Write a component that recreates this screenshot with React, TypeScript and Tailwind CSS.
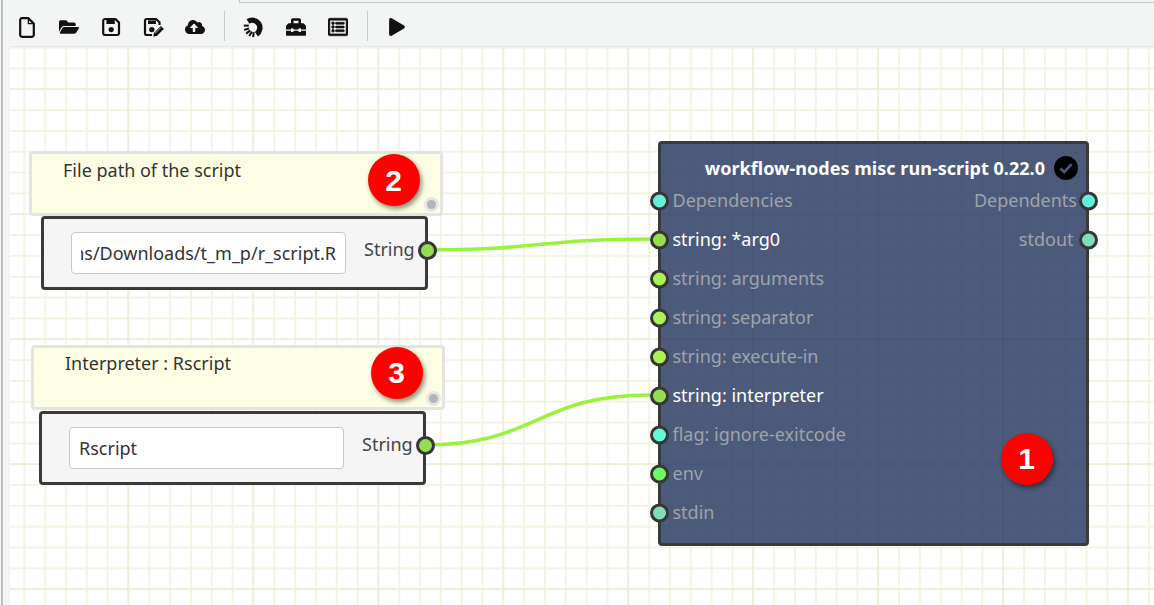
import { FaFolderOpen, FaCloudUploadAlt, FaToolbox, FaRegListAlt, FaPlay } from "react-icons/fa";

const gridClass =
  "bg-fixed bg-[image:linear-gradient(to_right,#e7ead6_1.5px,transparent_1.5px),linear-gradient(to_bottom,#e7ead6_1.5px,transparent_1.5px),linear-gradient(to_right,#f3f5e4_1.5px,transparent_1.5px),linear-gradient(to_bottom,#f3f5e4_1.5px,transparent_1.5px)] bg-[size:125px_125px,125px_125px,20.833px_20.833px,20.833px_20.833px] bg-[position:2.5px_0px,0px_88.5px,2.5px_0px,0px_5px]";

const darkGridClass =
  "bg-fixed bg-[image:linear-gradient(to_right,#475573_1.5px,transparent_1.5px),linear-gradient(to_bottom,#475573_1.5px,transparent_1.5px),linear-gradient(to_right,#4a5979_1.5px,transparent_1.5px),linear-gradient(to_bottom,#4a5979_1.5px,transparent_1.5px)] bg-[size:125px_125px,125px_125px,20.833px_20.833px,20.833px_20.833px] bg-[position:2.5px_0px,0px_88.5px,2.5px_0px,0px_5px]";

function FileIcon() {
  return (
    <svg width="16" height="21" viewBox="0 0 16 21" fill="none">
      <path d="M3 1.2h6.4l5.4 5.4v11A2.2 2.2 0 0 1 12.6 19.8H3A2 2 0 0 1 1.2 17.6V3.4A2 2 0 0 1 3 1.2z" stroke="#111" strokeWidth="2.2" strokeLinejoin="round" />
      <path d="M9.4 1.2v5.4h5.4" stroke="#111" strokeWidth="1.4" />
    </svg>
  );
}

function SaveIcon() {
  return (
    <svg width="19" height="20" viewBox="0 0 19 20" fill="none">
      <path d="M3 2h10.4l3.6 3.6V16.4A1.8 1.8 0 0 1 15.2 18H3A1.8 1.8 0 0 1 1.2 16.4V3.6A1.8 1.8 0 0 1 3 2z" stroke="#111" strokeWidth="2.2" strokeLinejoin="round" />
      <rect x="4.4" y="3" width="8.4" height="4" fill="#111" />
      <circle cx="9.2" cy="12.6" r="2.6" fill="#111" />
    </svg>
  );
}

function SaveEditIcon() {
  return (
    <svg width="21" height="21" viewBox="0 0 21 21" fill="none">
      <path d="M9 18H3.5A1.6 1.6 0 0 1 2 16.4V3.6A1.6 1.6 0 0 1 3.5 2H13l3.5 3.2V8" stroke="#111" strokeWidth="2.2" strokeLinejoin="round" />
      <rect x="5" y="3.4" width="8" height="3.6" fill="#111" />
      <circle cx="8.8" cy="12.6" r="2.7" fill="#111" />
      <path d="M10.2 19.6l.7-3.6 7-7 2.9 2.9-7 7z" fill="#111" />
      <path d="M12 16.4l5.8-5.8" stroke="#f3f5f4" strokeWidth=".7" />
    </svg>
  );
}

function SpinnerIcon() {
  return (
    <svg width="22" height="22" viewBox="0 0 22 22" fill="none">
      <path d="M5 5.4A7.6 7.6 0 1 1 13.4 18.2" stroke="#111" strokeWidth="5.4" />
      <g stroke="#111" strokeWidth="2">
        <path d="M.8 9.6h5" />
        <path d="M1.2 14l4.8-1.6" />
        <path d="M3.2 17.6l4-3.2" />
        <path d="M6.2 20l2.8-4.4" />
        <path d="M10.2 21.2l.5-5" />
      </g>
    </svg>
  );
}

function ToolButton({ children }: { children: React.ReactNode }) {
  return <button className="flex h-[32px] w-[42px] items-center justify-center text-[#111]">{children}</button>;
}

function Separator() {
  return <div className="mx-2 h-[30px] w-px bg-[#c9cbca]" />;
}

function Toolbar() {
  return (
    <div className="flex h-[43px] items-start pl-[3.5px] pt-[8px]">
      <ToolButton><FileIcon /></ToolButton>
      <ToolButton><FaFolderOpen size={20} /></ToolButton>
      <ToolButton><SaveIcon /></ToolButton>
      <ToolButton><SaveEditIcon /></ToolButton>
      <ToolButton><FaCloudUploadAlt size={20} /></ToolButton>
      <Separator />
      <ToolButton><SpinnerIcon /></ToolButton>
      <ToolButton><FaToolbox size={20} /></ToolButton>
      <ToolButton><FaRegListAlt size={20} stroke="currentColor" strokeWidth={16} /></ToolButton>
      <Separator />
      <ToolButton><FaPlay size={18} /></ToolButton>
    </div>
  );
}

function Badge({ n, className }: { n: number; className: string }) {
  return (
    <div className={`absolute flex h-[52px] w-[52px] items-center justify-center rounded-full bg-[#fe0000] text-[30px] font-bold text-white shadow-[2px_3px_5px_rgba(0,0,0,0.45)] [font-family:'Liberation_Sans',sans-serif] ${className}`}>
      {n}
    </div>
  );
}

function Port({ color, side }: { color: string; side: "left" | "right" }) {
  return (
    <span
      className={`absolute top-1/2 h-[19px] w-[19px] -translate-y-1/2 rounded-full border-[3px] border-[#363636] ${side === "left" ? "-left-[11px]" : "-right-[12px]"}`}
      style={{ backgroundColor: color }}
    />
  );
}

function Note({ text, className, textClass }: { text: string; className: string; textClass: string }) {
  return (
    <div className={`absolute h-[65px] w-[414px] rounded-[4px] border-[3px] border-[#e4e4e2] bg-[#fdfee3] text-[18px] leading-[24px] text-[#333] ${className}`}>
      <div className={textClass}>{text}</div>
      <div className="absolute bottom-[1px] right-[1px] flex h-[15px] w-[15px] items-center justify-center rounded-full bg-[#e6e6e2]">
        <div className="h-[9px] w-[9px] rounded-full bg-[#b4b4bc]" />
      </div>
    </div>
  );
}

function InputNode({ value, clipped, className }: { value: string; clipped?: boolean; className: string }) {
  return (
    <div className={`absolute flex h-[74px] w-[387px] items-center rounded-[4px] border-[3px] border-[#3a3a3a] bg-[#f5f5f5] pl-[27px] text-[18px] text-[#333] ${className}`}>
      <div className="h-[42px] w-[275px] rounded-[4px] border border-[#c9c9cb] bg-white px-[9px]">
        <div className={`flex h-full items-center overflow-hidden whitespace-nowrap ${clipped ? "justify-end" : ""}`}>
          <span className="shrink-0">{value}</span>
        </div>
      </div>
      <div className="relative -top-[4px] ml-[18px] text-[#444]">String</div>
      <div className="absolute right-0 top-1/2 h-0 w-0 -translate-y-[2.5px]">
        <Port color="#94dc50" side="right" />
      </div>
    </div>
  );
}

type Row = { label: string; color: string; active?: boolean };

const inputs: Row[] = [
  { label: "Dependencies", color: "#66eedd" },
  { label: "string: *arg0", color: "#96de4e", active: true },
  { label: "string: arguments", color: "#aaf25a" },
  { label: "string: separator", color: "#aaf25a" },
  { label: "string: execute-in", color: "#aaf25a" },
  { label: "string: interpreter", color: "#96de4e", active: true },
  { label: "flag: ignore-exitcode", color: "#62f8d8" },
  { label: "env", color: "#70f860" },
  { label: "stdin", color: "#80dcbc" },
];

function ScriptNode() {
  return (
    <div className={`absolute left-[648px] top-[94px] h-[405px] w-[431px] rounded-[4px] border-[3px] border-[#3a3a3a] bg-[#4c5b7b] pt-[11px] text-[18px] ${darkGridClass}`}>
      <div className="flex h-[26px] items-center justify-end pr-[8px]">
        <span className="font-bold tracking-[0.03px] text-white">workflow-nodes misc run-script 0.22.0</span>
        <span className="ml-[9px] flex h-[24px] w-[24px] items-center justify-center rounded-full bg-black">
          <svg width="14" height="12" viewBox="0 0 14 12" fill="none">
            <path d="M1.5 6.5l3.7 3.6 7.3-8" stroke="#4c5b7b" strokeWidth="2.6" />
          </svg>
        </span>
      </div>
      <div className="relative">
        {inputs.map((row, i) => (
          <div key={row.label} className="relative flex h-[39px] items-center pl-[11.5px]">
            <Port color={row.color} side="left" />
            <span className={row.active ? "text-white" : "text-[#a0a3a8]"}>{row.label}</span>
            {i === 0 && (
              <span className="ml-auto pr-[9px] text-[#a0a3a8]">Dependents<Port color="#66eedd" side="right" /></span>
            )}
            {i === 1 && (
              <span className="ml-auto pr-[12.5px] text-[#a0a3a8]">stdout<Port color="#80dcbc" side="right" /></span>
            )}
          </div>
        ))}
      </div>
    </div>
  );
}

export default function App() {
  return (
    <div className="flex h-[605px] w-[1154px] overflow-hidden bg-[#f3f5f4] [font-family:'Noto_Sans',sans-serif]">
      <div className="ml-px h-full w-[1.5px] shrink-0 bg-[#bcbcbc]" />
      <div className="flex min-w-0 flex-1 flex-col">
        <div className="ml-[236px] h-[3px] shrink-0 border-b-[1.5px] border-l-[1.5px] border-[#c4c6ca]" />
        <Toolbar />
        <div className={`relative ml-[7.5px] flex-1 border-t border-[#e9eae2] bg-white ${gridClass}`}>
          <svg className="absolute left-0 top-0" width="1144" height="558" fill="none">
            <path d="M417 203C528 203 530 192 640 192" stroke="#9af23f" strokeWidth="3.6" />
            <path d="M415 398C527 398 527 348 640 348" stroke="#9af23f" strokeWidth="3.6" />
          </svg>
          <Note text="File path of the script" className="left-[18.5px] top-[104px]" textClass="pl-[31.5px] pt-[4px]" />
          <InputNode value="ns/Downloads/t_m_p/r_script.R" clipped className="left-[31px] top-[169px]" />
          <Note text="Interpreter : Rscript" className="left-[20.5px] top-[298px]" textClass="pl-[31.5px] pt-[3px]" />
          <InputNode value="Rscript" className="left-[29px] top-[364px]" />
          <ScriptNode />
          <Badge n={2} className="left-[357.5px] top-[107px]" />
          <Badge n={3} className="left-[360.5px] top-[299.5px]" />
          <Badge n={1} className="left-[990.5px] top-[385.5px]" />
        </div>
      </div>
    </div>
  );
}
